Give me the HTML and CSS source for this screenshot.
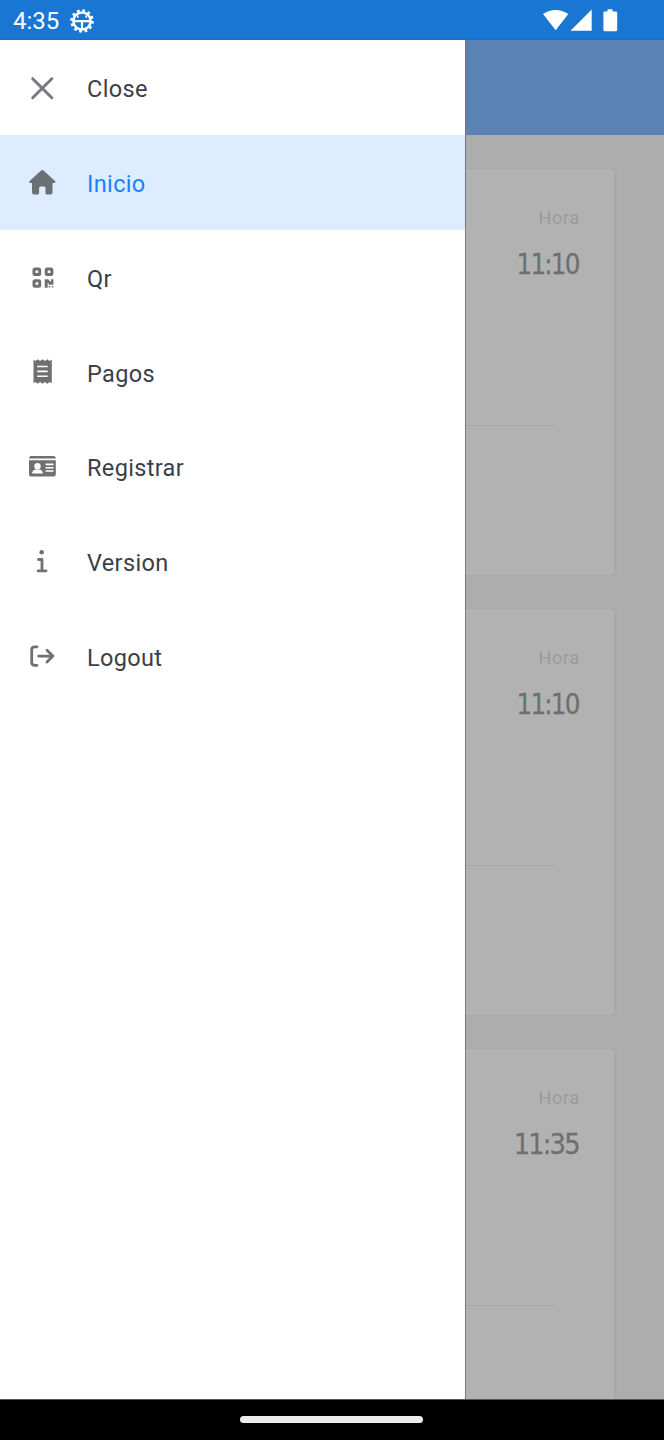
FILE: index.html
```html
<!DOCTYPE html>
<html lang="es">
<head>
<meta charset="utf-8">
<title>Inicio</title>
<link rel="stylesheet" href="styles.css">
</head>
<body>
<header class="status">
  <span class="clock">4:35</span>
  <svg class="debug" viewBox="0 0 24 24"><circle cx="12" cy="12" r="8.600" fill="none" stroke="currentColor" stroke-width="2.500"/><circle cx="12" cy="12" r="10.500" fill="none" stroke="currentColor" stroke-width="2.600" stroke-dasharray="2.750 2.750"/><path d="M4 12.200h16M12 12v9M7 7.700h1.600M15.400 7.700H17" fill="none" stroke="currentColor" stroke-width="2.200"/></svg>
  <svg class="signals" viewBox="0 0 76 24"><path d="M0 5Q12.500-3 25.300 5L12.700 21.300ZM27.500 21.700 48.700.5V21.700Z"/><path d="M61 2.500H64.500V.2h5v2.300h3.500q1.200 0 1.200 1.200v17q0 1.500-1.500 1.500H61.900q-1.500 0-1.500-1.500V3.700q0-1.200.6-1.200Z"/></svg>
</header>
<main class="screen">
  <nav class="drawer">
    <a class="item"><svg class="icon" viewBox="0 0 28 28"><path class="line close" d="m4.700 4.700 19.100 19.100M23.800 4.700 4.700 23.800"/></svg><span>Close</span></a>
    <a class="item active"><svg class="icon" viewBox="0 0 28 28"><path d="M13.100 1.400q1.200-1 2.400 0L27 11.900q1.200 1.700-.7 2H24.500v9.500q0 2-2 2h-3.700q-1.300 0-1.300-1.300v-5q0-1.500-1.500-1.500h-3.400q-1.500 0-1.500 1.500v5q0 1.300-1.300 1.300H6q-2 0-2-2v-9.500H2.300q-1.900-.3-.7-2Z"/></svg><span>Inicio</span></a>
    <a class="item"><svg class="icon" viewBox="0 0 28 28"><g class="line qr"><rect x="6" y="4.900" width="5.700" height="5.500" rx="1"/><rect x="18.200" y="4.900" width="5.700" height="5.500" rx="1"/><rect x="6" y="16.700" width="5.700" height="5.500" rx="1"/></g><path d="M16.700 15.200h3.700l1.300 2H23v-2h2.400v5.500H20.500v-1.700H19.700v4.700h-3ZM20.700 22h1.600v1.500h-1.600ZM23.700 22h1.600v1.500h-1.600Z"/></svg><span>Qr</span></a>
    <a class="item"><svg class="icon" viewBox="0 0 28 28"><path d="M5.500 1.500l2 1.400 2.200-1.600 2.400 1.600 2.400-1.600 2.400 1.600 2.400-1.600L21.500 2.900l2.300-1.400V25.300l-2.300-1.200-2.200 1.600-2.400-1.600-2.400 1.600-2.400-1.600-2.400 1.600-2.200-1.600-2 1.200Z"/><path class="cut" d="M9.200 8.500h10.500M9.200 13.400h10.500M9.200 18.300h10.500"/></svg><span>Pagos</span></a>
    <a class="item"><svg class="icon" viewBox="0 0 28 28"><path d="M1 5.500Q1 2.900 3.400 2.900h22q2.400 0 2.400 2.600ZM1 7.200h26.800v13.700q0 2.700-2.700 2.700H3.700Q1 23.600 1 20.900Z"/><path class="hole" d="M4 20.400q.6-4 4-4h3q3.400 0 4 4Z"/><circle class="hole" cx="9.500" cy="13.200" r="3.200"/><path class="cut" d="M17.500 11.400h8M17.500 14.700h8M17.500 18h8"/></svg><span>Registrar</span></a>
    <a class="item"><svg class="icon" viewBox="0 0 28 28"><circle cx="13.700" cy="4.300" r="2.300"/><path class="line" d="M10.500 11.500h3.500v11.300M10.200 22.900h7.800"/></svg><span>Version</span></a>
    <a class="item"><svg class="icon" viewBox="0 0 28 28"><path class="line" d="M9 3.800H6.700q-3 0-3 3v12.500q0 3 3 3H9M10.700 13.100h13.800M19 7.300l5.900 5.800-5.900 5.800"/></svg><span>Logout</span></a>
  </nav>
  <section class="page">
    <div class="appbar"></div>
    <div class="cards">
      <article class="card"><span class="label">Hora</span><span class="time">11:10</span><hr class="rule"></article>
      <article class="card"><span class="label">Hora</span><span class="time">11:10</span><hr class="rule"></article>
      <article class="card"><span class="label">Hora</span><span class="time wide">11:35</span><hr class="rule"></article>
    </div>
  </section>
</main>
<footer class="navbar"><div class="handle"></div></footer>
</body>
</html>
```
FILE: styles.css
```css
* { box-sizing: border-box; }
body { margin: 0; height: 1440px; display: flex; flex-direction: column; overflow: hidden; font-family: Roboto, sans-serif; }
.status { height: 40px; flex: none; display: flex; align-items: center; padding: 2px 45px 0 13px; background: #1976d2; border-bottom: 1px solid #176fc8; color: #fff; }
.clock { width: 57px; font-size: 24px; line-height: 28px; }
.debug { width: 24px; height: 24px; overflow: visible; }
.signals { width: 76px; height: 24px; margin-left: auto; fill: #fff; }
.screen { height: 1359px; flex: none; display: flex; overflow: hidden; }
.drawer { width: 465px; flex: none; background: #fff; padding-top: .6px; }
.item { height: 94.800px; display: flex; align-items: center; padding: 0 28px; gap: 31px; color: #3b3f47; font-size: 23.500px; line-height: 30px; letter-spacing: .35px; }
.item span { padding-top: 2.400px; }
.active { background: #deecff; color: #1583ff; }
.icon { width: 28px; height: 28px; flex: none; fill: #707070; color: #707070; }
.active .icon { fill: #6b7075; }
.line { fill: none; stroke: #707070; stroke-width: 2.800; stroke-linecap: round; stroke-linejoin: round; }
.close { stroke: #777a7f; stroke-width: 3; }
.qr { stroke-width: 3; }
.cut { fill: none; stroke: #fff; stroke-width: 1.600; }
.hole { fill: #fff; }
.page { flex: 1; background: #adadad; border-left: 1px solid #737577; }
.appbar { height: 95px; background: #5a82b5; }
.cards { display: flex; flex-direction: column; gap: 34px; padding: 34px 51px 0 0; }
.card { height: 406px; flex: none; display: flex; flex-direction: column; align-items: flex-end; padding: 37px 34px 0 0; background: #b2b2b2; border-radius: 0 4px 4px 0; box-shadow: 1px 0 3px #a2a2a2; }
.label { color: #9b9b9b; font-size: 18px; line-height: 24px; letter-spacing: .7px; }
.time { margin-top: 15px; margin-right: 1px; color: #6e6f71; font-family: "DejaVu Sans", sans-serif; font-size: 28px; line-height: 39px; letter-spacing: -2px; -webkit-text-stroke: .3px #6e6f71; transform: scaleX(.88); transform-origin: right; }
.wide { transform: scaleX(.92); }
.rule { width: 87px; height: 1px; margin: 141px 27px 0 0; border: 0; background: #a5a5a5; }
.navbar { height: 41px; flex: none; display: flex; padding-left: 240px; background: #000; border-top: 1px solid #555; }
.handle { width: 183px; height: 7px; margin-top: 16px; border-radius: 4px; background: #ebebeb; }
```
